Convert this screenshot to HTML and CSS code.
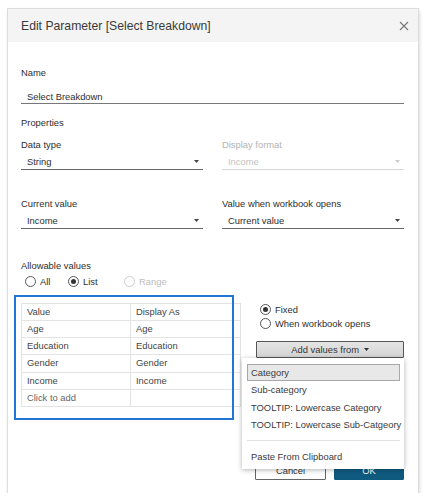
FILE: index.html
```html
<!DOCTYPE html>
<html lang="en">
<head>
<meta charset="utf-8">
<title>Edit Parameter</title>
<link rel="stylesheet" href="styles.css">
</head>
<body>
<div class="dialog">
  <div class="titlebar">
    <span class="title">Edit Parameter [Select Breakdown]</span>
    <svg class="close" width="10" height="10" viewBox="0 0 10 10"><path d="M1 1 L9 9 M9 1 L1 9" stroke="#777" stroke-width="1.1" fill="none"/></svg>
  </div>
  <div class="body">
    <div class="label l-name">Name</div>
    <div class="textfield">Select Breakdown</div>
    <div class="label l-props">Properties</div>

    <div class="grid g1">
      <div class="col">
        <div class="label">Data type</div>
        <div class="select"><span>String</span><svg class="caret" width="5" height="3" viewBox="0 0 5 3"><polygon points="0,0 5,0 2.5,3" fill="#444"/></svg></div>
      </div>
      <div class="col disabled">
        <div class="label">Display format</div>
        <div class="select"><span>Income</span><svg class="caret" width="5" height="3" viewBox="0 0 5 3"><polygon points="0,0 5,0 2.5,3" fill="#ccc"/></svg></div>
      </div>
    </div>

    <div class="grid g2">
      <div class="col">
        <div class="label">Current value</div>
        <div class="select"><span>Income</span><svg class="caret" width="5" height="3" viewBox="0 0 5 3"><polygon points="0,0 5,0 2.5,3" fill="#444"/></svg></div>
      </div>
      <div class="col">
        <div class="label">Value when workbook opens</div>
        <div class="select"><span>Current value</span><svg class="caret" width="5" height="3" viewBox="0 0 5 3"><polygon points="0,0 5,0 2.5,3" fill="#444"/></svg></div>
      </div>
    </div>

    <div class="label l-allow">Allowable values</div>
    <div class="radios">
      <span class="radio r-all"><span class="circle"></span>All</span>
      <span class="radio r-list"><span class="circle checked"></span>List</span>
      <span class="radio off"><span class="circle"></span>Range</span>
    </div>

    <div class="listarea">
      <div class="annot"></div>
      <div class="values">
        <div class="cell">Value</div><div class="cell">Display As</div>
        <div class="cell">Age</div><div class="cell">Age</div>
        <div class="cell">Education</div><div class="cell">Education</div>
        <div class="cell">Gender</div><div class="cell">Gender</div>
        <div class="cell">Income</div><div class="cell">Income</div>
        <div class="cell add">Click to add</div><div class="cell"></div>
      </div>
      <div class="options">
        <span class="radio"><span class="circle checked"></span>Fixed</span>
        <span class="radio"><span class="circle"></span>When workbook opens</span>
        <div class="addwrap">
          <div class="btn-add">Add values from <svg class="caret2" width="5" height="3" viewBox="0 0 5 3"><polygon points="0,0 5,0 2.5,3" fill="#333"/></svg></div>
          <div class="menu">
            <div class="item active">Category</div>
            <div class="item">Sub-category</div>
            <div class="item">TOOLTIP: Lowercase Category</div>
            <div class="item">TOOLTIP: Lowercase Sub-Catgeory</div>
            <div class="sep"></div>
            <div class="item">Paste From Clipboard</div>
          </div>
        </div>
      </div>
    </div>

    <div class="footer">
      <button class="btn cancel">Cancel</button>
      <button class="btn ok">OK</button>
    </div>
  </div>
</div>
</body>
</html>
```
FILE: styles.css
```css
html, body {
  margin: 0;
  padding: 0;
  background: #ffffff;
}
body {
  font-family: "Liberation Sans", Arial, sans-serif;
  font-size: 9.4px;
  color: #2e2e2e;
}
.dialog {
  margin: 9px 0 0 8px;
  width: 410px;
  height: 484px;
  background: #ffffff;
  box-shadow: 0 0 0 1px #dddddd, 1px 2px 4px rgba(0, 0, 0, 0.22);
  display: flex;
  flex-direction: column;
}
.titlebar {
  height: 33px;
  background: #f4f4f4;
  display: flex;
  align-items: center;
  justify-content: space-between;
  padding: 0 9px 0 13px;
}
.title {
  font-size: 12.2px;
  color: #3a3a3a;
}
.close {
  display: block;
}
.body {
  flex: 1;
  display: flex;
  flex-direction: column;
  padding: 0 14px 13px 13px;
  position: relative;
}
.label {
  line-height: 12px;
  height: 12px;
}
.l-name { margin-top: 25px; }
.textfield {
  margin-top: 11px;
  height: 13px;
  line-height: 13px;
  padding-left: 6px;
  border-bottom: 1.5px solid #777777;
}
.l-props { margin-top: 12.5px; }
.grid {
  display: grid;
  grid-template-columns: 182px 182px;
  column-gap: 19px;
}
.g1 { margin-top: 10px; }
.g2 { margin-top: 28px; }
.select {
  margin-top: 4px;
  height: 14px;
  line-height: 14px;
  padding-left: 6px;
  border-bottom: 1.2px solid #666666;
  display: flex;
  align-items: center;
  justify-content: space-between;
}
.caret {
  margin-right: 4px;
  display: block;
}
.disabled .label { color: #b3b3b3; }
.disabled .select { color: #c2c2c2; border-bottom-color: #d6d6d6; }
.l-allow { margin-top: 31px; }
.radios {
  margin-top: 4px;
  height: 12px;
  display: flex;
  align-items: center;
  padding-left: 4px;
}
.r-all { width: 43px; }
.r-list { width: 56px; }
.radio {
  display: flex;
  align-items: center;
  gap: 4px;
  line-height: 14px;
  white-space: nowrap;
}
.radio.off { color: #bdbdbd; }
.circle {
  width: 11px;
  height: 11px;
  box-sizing: border-box;
  border: 1px solid #555555;
  border-radius: 50%;
  background: #ffffff;
  display: flex;
  align-items: center;
  justify-content: center;
}
.circle.checked::after {
  content: "";
  width: 5px;
  height: 5px;
  border-radius: 50%;
  background: #333333;
}
.off .circle { border-color: #cccccc; }
.listarea {
  margin-top: 15px;
  display: flex;
  align-items: flex-start;
  position: relative;
}
.annot {
  position: absolute;
  left: -7px;
  top: -8px;
  width: 220px;
  height: 125px;
  box-sizing: border-box;
  border: 2.3px solid #1f77d3;
  pointer-events: none;
  z-index: 2;
}
.values {
  display: grid;
  grid-template-columns: 109px 110px;
  grid-auto-rows: 17.3px;
  border-top: 1px solid #e3e3e3;
  border-left: 1px solid #e3e3e3;
  box-sizing: border-box;
}
.cell {
  box-sizing: border-box;
  border-right: 1px solid #e3e3e3;
  border-bottom: 1px solid #e3e3e3;
  line-height: 16px;
  padding-left: 5px;
  color: #444444;
}
.cell.add { color: #666666; }
.options {
  margin-left: 15px;
  width: 149px;
  display: flex;
  flex-direction: column;
}
.options .radio {
  padding-left: 4px;
  height: 14px;
}
.addwrap {
  position: relative;
  margin-top: 10px;
}
.btn-add {
  height: 17px;
  box-sizing: border-box;
  border: 1px solid #555555;
  border-radius: 1px;
  background: linear-gradient(#e4e4e4, #d4d4d4);
  line-height: 15px;
  text-align: center;
  color: #333333;
}
.caret2 {
  vertical-align: middle;
  margin-left: 2px;
  position: relative;
  top: -1px;
}
.menu {
  position: absolute;
  top: 100%;
  right: 0;
  width: 162px;
  box-sizing: border-box;
  background: #ffffff;
  padding: 6px 4px 4px 5px;
  box-shadow: 0 1px 5px rgba(0, 0, 0, 0.3);
  z-index: 5;
}
.item {
  height: 17.5px;
  line-height: 17.5px;
  padding-left: 4px;
  box-sizing: border-box;
  color: #3a3a3a;
  white-space: nowrap;
}
.item.active {
  background: #e8e8e8;
  border: 1px solid #a8a8a8;
  line-height: 15.5px;
  padding-left: 3px;
}
.sep {
  height: 1px;
  background: #e2e2e2;
  margin: 6px 0 7px;
}
.footer {
  margin-top: auto;
  display: flex;
  justify-content: flex-end;
  gap: 8px;
}
.btn {
  height: 20px;
  font-family: "Liberation Sans", Arial, sans-serif;
  font-size: 9.4px;
  padding: 0;
  border-radius: 1px;
  box-sizing: border-box;
}
.cancel {
  width: 71px;
  background: #ffffff;
  border: 1px solid #666666;
  color: #333333;
}
.ok {
  width: 70px;
  background: #0f5b80;
  border: 1px solid #0f5b80;
  color: #ffffff;
}
```
